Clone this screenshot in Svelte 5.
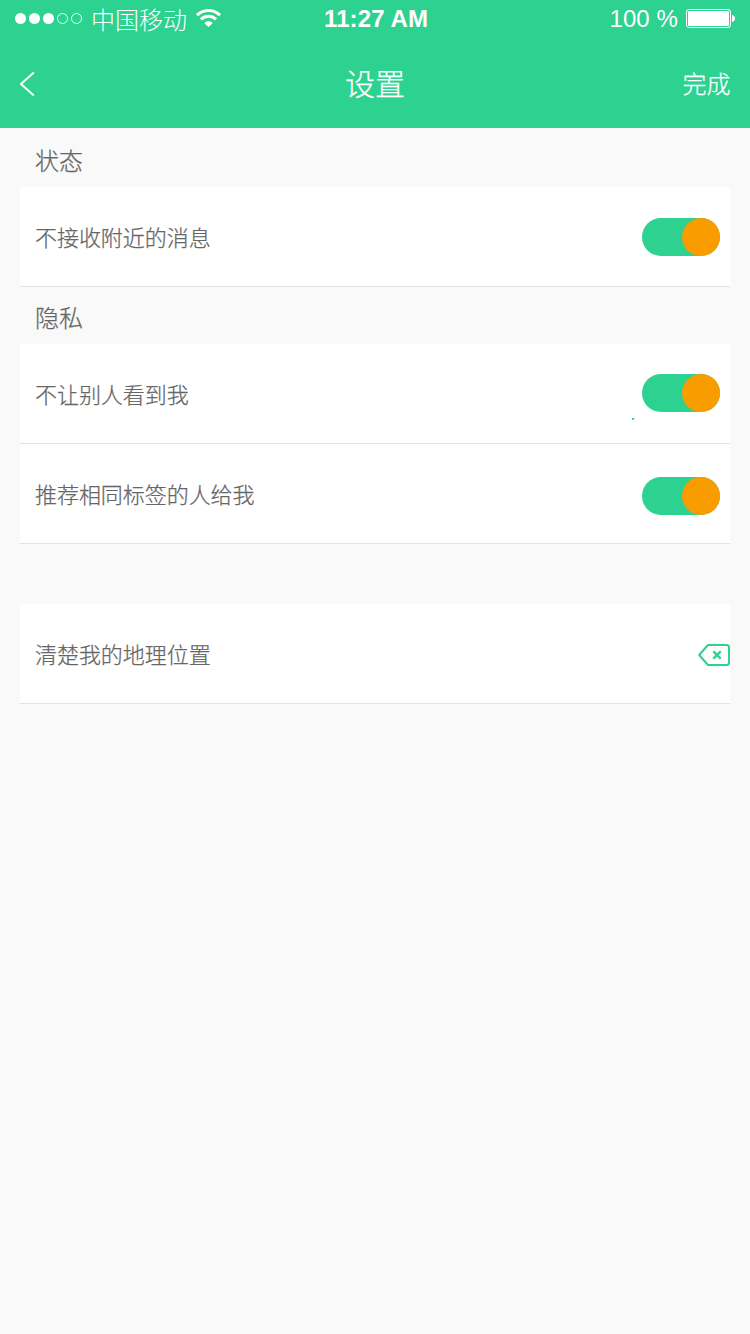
<script>
  let nearby = $state(true);
  let hidden = $state(true);
  let recommend = $state(true);
</script>

{#snippet toggle(on, flip)}
  <button class="toggle" class:on role="switch" aria-checked={on} onclick={flip}>
    <span class="knob"></span>
  </button>
{/snippet}

<div class="screen">
  <header>
    <div class="status">
      <div class="carrier">
        <svg class="signal" width="68" height="12" viewBox="0 0 68 12">
          <g fill="#fff">
            <circle cx="5.5" cy="5.5" r="5.5" />
            <circle cx="19.5" cy="5.5" r="5.5" />
            <circle cx="33.5" cy="5.5" r="5.5" />
          </g>
          <g fill="none" stroke="#fff" stroke-width="0.9">
            <circle cx="47.5" cy="5.5" r="5" />
            <circle cx="61.5" cy="5.5" r="5" />
          </g>
        </svg>
        <span class="name">中国移动</span>
        <svg class="wifi" width="25" height="18" viewBox="0 0 25 18">
          <g fill="none" stroke="#fff" stroke-width="3">
            <path d="M1 6.200C7.600-.1 17.400-.1 24 6.200" />
            <path d="M4.900 10.300C9.300 6.200 15.700 6.200 20.100 10.300" />
          </g>
          <path d="M8.300 14.200C10.800 11.400 14.200 11.400 16.700 14.200L12.500 18Z" fill="#fff" />
        </svg>
      </div>
      <span class="time">11:27 AM</span>
      <div class="power">
        <span class="percent">100 %</span>
        <svg width="49" height="19" viewBox="0 0 49 19">
          <rect x=".5" y=".5" width="44" height="18" rx="2.5" fill="none" stroke="#fff" />
          <rect x="2" y="2" width="41" height="15" rx="1" fill="#fff" />
          <path d="M46 6Q49 6.6 49 9.5T46 13Z" fill="#fff" />
        </svg>
      </div>
    </div>
    <nav>
      <button class="back" aria-label="返回">
        <svg width="15" height="26" viewBox="0 0 15 26">
          <path d="M13.800 1.500L1 13 13.800 24.500" fill="none" stroke="#fff" stroke-width="1.900" />
        </svg>
      </button>
      <h1>设置</h1>
      <button class="done">完成</button>
    </nav>
  </header>

  <main>
    <h2 class="first">状态</h2>
    <section>
      <div class="row">
        <span class="label">不接收附近的消息</span>
        {@render toggle(nearby, () => (nearby = !nearby))}
      </div>
    </section>

    <h2>隐私</h2>
    <section>
      <div class="row raised">
        <span class="label">不让别人看到我</span>
        <svg class="speck" width="3" height="2" viewBox="0 0 3 2"><path d="M0 0H3L1.500 1.300V2H0Z" fill="#2dd190" /></svg>
        {@render toggle(hidden, () => (hidden = !hidden))}
      </div>
      <div class="row lowered">
        <span class="label">推荐相同标签的人给我</span>
        {@render toggle(recommend, () => (recommend = !recommend))}
      </div>
    </section>

    <section class="clear">
      <div class="row flush">
        <span class="label">清楚我的地理位置</span>
        <button class="erase" aria-label="清楚">
          <svg width="33" height="22" viewBox="0 0 33 22">
            <g fill="none" stroke="#2dd190" stroke-width="2">
              <path d="M11 1H29.5Q32 1 32 3.5V18.500Q32 21 29.500 21H11L2.200 11Z" stroke-linejoin="round" />
              <path d="M16.300 7.400L23.700 14.600M23.700 7.400L16.300 14.600" stroke-width="2.300" />
            </g>
          </svg>
        </button>
      </div>
    </section>
  </main>
</div>

<style>
  :global(body) {
    margin: 0;
    background: #f9f9f9;
  }
  .screen {
    width: 750px;
    min-height: 1334px;
    background: #f9f9f9;
    color: #666;
    font-family: "Noto Sans CJK SC", sans-serif;
    font-weight: 300;
  }
  button {
    padding: 0;
    border: 0;
    background: none;
    color: inherit;
    font: inherit;
  }
  svg {
    display: block;
  }
  header {
    height: 128px;
    background: #2dd190;
    color: #fff;
  }
  .status,
  nav {
    display: grid;
    grid-template-columns: 1fr auto 1fr;
    align-items: center;
  }
  .status {
    height: 37px;
    padding: 0 15px;
  }
  .carrier,
  .power {
    display: flex;
    align-items: center;
  }
  .name {
    margin: 1px 9px 0 8px;
    font-size: 24px;
    line-height: 34px;
  }
  .wifi {
    margin-bottom: 2px;
  }
  .time {
    margin-left: 2px;
    font: 700 24px/28px "Liberation Sans", sans-serif;
    letter-spacing: 0.1px;
  }
  .power {
    justify-content: flex-end;
    gap: 8px;
  }
  .percent {
    font: 400 24px/28px "Liberation Sans", sans-serif;
    letter-spacing: 0.1px;
  }
  nav {
    height: 91px;
    padding: 0 20px;
  }
  .back {
    justify-self: start;
    margin-top: 2px;
  }
  h1 {
    margin: 0 0 2px;
    font-size: 30px;
    line-height: 44px;
    font-weight: 300;
  }
  .done {
    justify-self: end;
    margin-right: -0.5px;
    font-size: 24px;
    line-height: 36px;
  }
  h1,
  h2,
  .done,
  .label {
    -webkit-text-stroke: 0.25px currentColor;
  }
  main {
    padding: 0 20px;
  }
  h2 {
    display: flex;
    align-items: center;
    height: 57px;
    margin: 0;
    padding: 2px 15px 0;
    box-sizing: border-box;
    font-size: 24px;
    font-weight: 300;
  }
  h2.first {
    height: 59px;
    padding-top: 4px;
  }
  .row {
    display: flex;
    align-items: center;
    height: 100px;
    box-sizing: border-box;
    padding: 1px 10px 0 15px;
    border-bottom: 1px solid #e2e2e2;
    background: #fff;
  }
  .label {
    flex: 1;
    margin-bottom: 2px;
    font-size: 22px;
    line-height: 32px;
    letter-spacing: -0.05px;
  }
  .toggle {
    display: flex;
    width: 78px;
    height: 38px;
    border-radius: 19px;
    background: #d5d5d5;
  }
  .toggle.on {
    justify-content: flex-end;
    background: #2dd190;
  }
  .raised .toggle {
    margin-bottom: 2px;
  }
  .lowered .toggle {
    margin-top: 4px;
  }
  .knob {
    width: 38px;
    height: 38px;
    border-radius: 50%;
    background: #f99c00;
  }
  .speck {
    margin: 50px 7px 0 0;
  }
  .clear {
    margin-top: 60px;
  }
  .flush {
    padding-right: 0;
  }
  .erase {
    margin-top: 2px;
  }
</style>
